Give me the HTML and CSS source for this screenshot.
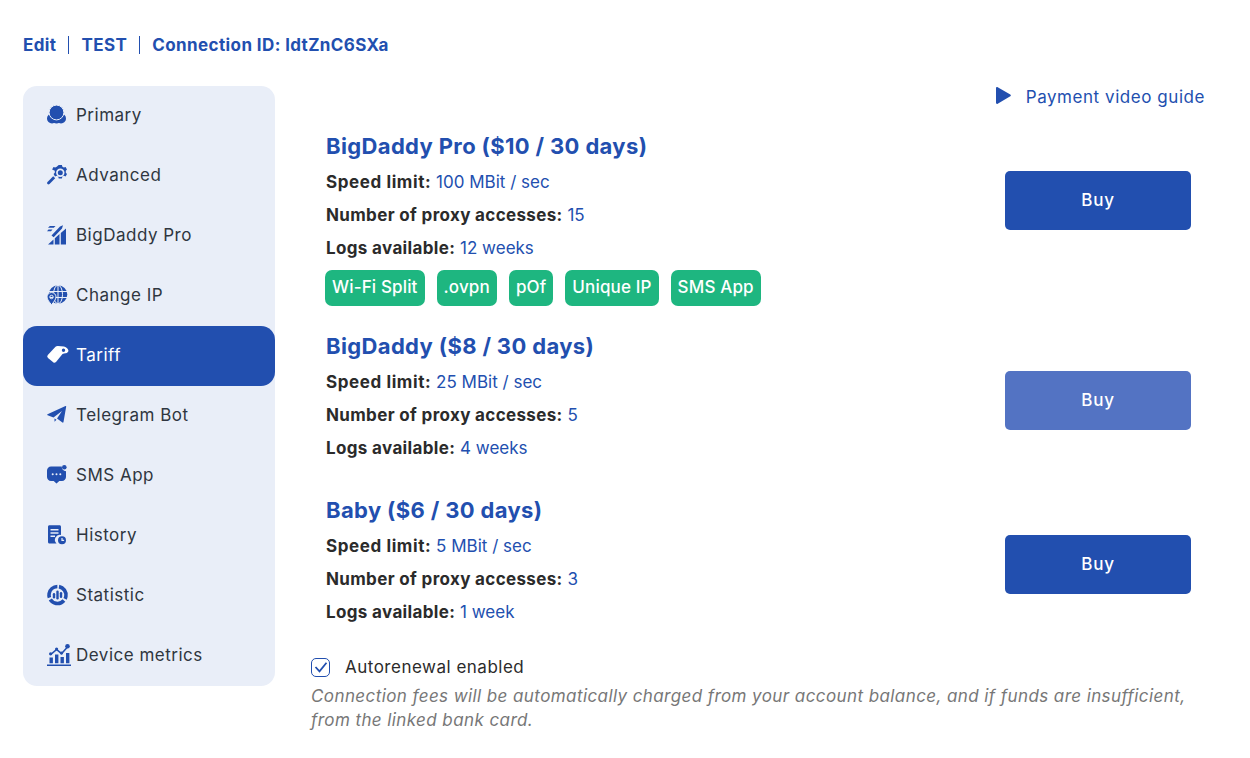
FILE: index.html
```html
<!DOCTYPE html>
<html>
<head>
<title>Tariff</title>
<link rel="stylesheet" href="styles.css">
</head>
<body>

<div class="topbar">
  <span class="crumb">Edit</span>
  <span class="crumb">TEST</span>
  <span class="crumb">Connection ID: ldtZnC6SXa</span>
</div>

<div class="page">
  <div class="sidebar">
    <a class="item">
      <svg class="ico" viewBox="0 0 20 20"><circle cx="5" cy="13.500" r="5"/><circle cx="14" cy="13.500" r="5"/><circle cx="9.500" cy="15" r="3.500"/><circle cx="9.500" cy="7.500" r="7.400" stroke="#e9eef8" stroke-width="1"/></svg>
      <span>Primary</span>
    </a>
    <a class="item">
      <svg class="ico" viewBox="0 0 20 20"><path fill-rule="evenodd" d="M11.700 0h3.200l.5 1.800 1.500.8 1.700-.6 1.400 2.500-1.200 1.200v2l1.200 1.200-1.400 2.500-1.700-.6-1.500.8-.5 1.800h-3.200l-.5-1.800-1.500-.8-1.700.6-1.400-2.500 1.200-1.200v-2L5.100 4.500 6.500 2l1.700.6 1.500-.8zM13.300 3.500a4.200 4.200 0 1 0 0 8.400 4.200 4.200 0 0 0 0-8.400z"/><circle cx="13.300" cy="7.700" r="2.500"/><path d="M6.200 11.300l2 2-5.700 5.700c-.6.500-1.400.500-2 0s-.5-1.400 0-2z"/></svg>
      <span>Advanced</span>
    </a>
    <a class="item">
      <svg class="ico" viewBox="0 0 20 20"><path d="M1 19.500l5.500-5v5zM7.800 19.500v-6.200l4.700-4.200v10.400zM13.800 19.500V7.900L19 3.500v16z"/><path d="M4.500 10.500L13 1.500l3-1.200-1 3.200-8.300 8.800zM2.800 1h5.700L6.800 2.800H1zM1.500 4.500h4L4 6.200H0z"/></svg>
      <span>BigDaddy Pro</span>
    </a>
    <a class="item">
      <svg class="ico" viewBox="0 0 20 20"><circle cx="11" cy="9.500" r="9.300"/><g fill="none" stroke="#e9eef8" stroke-width="1"><path d="M2 6.500h18M2 12.500h18M11 0v19"/><ellipse cx="11" cy="9.500" rx="4.500" ry="9.300"/></g><path fill-rule="evenodd" stroke="#e9eef8" stroke-width="1" d="M4.500 7.500c2.500 0 4.500 2 4.500 4.400 0 2.600-2.600 5.600-4.500 7.800C2.600 17.500 0 14.500 0 11.900c0-2.400 2-4.400 4.500-4.400zm0 2.800a1.700 1.700 0 1 0 0 3.400 1.700 1.700 0 0 0 0-3.400z"/></svg>
      <span>Change IP</span>
    </a>
    <a class="item active">
      <svg class="ico" viewBox="0 0 20 20"><path fill-rule="evenodd" d="M.8 10L8.500 1.800Q9.500.8 11 1L17 1.500Q21 2.500 21.500 6 20.500 8.500 17 8.500L15.500 9 9 17Q7.600 18.300 6.500 17.500L1 13Q-.5 11.500.8 10zM16.500 3.500a1.700 1.700 0 1 0 0 3.400 1.700 1.700 0 0 0 0-3.400z"/></svg>
      <span>Tariff</span>
    </a>
    <a class="item">
      <svg class="ico" viewBox="0 0 20 20"><path d="M.5 9.300L18.500 1c.4-.2.800.1.700.6L16.500 17c-.1.600-.6.800-1.100.5L10 13.500 15 6 6.500 12.500 .6 10.300c-.5-.2-.5-.8-.1-1zM7.500 13.500l2 1.200-2 2z"/></svg>
      <span>Telegram Bot</span>
    </a>
    <a class="item">
      <svg class="ico" viewBox="0 0 20 20"><path fill-rule="evenodd" d="M4 1.500h10.800a4.300 4.300 0 0 0 4.200 4.800V12c0 2.200-1.800 4-4 4h-2.700l-2.800 2.500L6.700 16H4c-2.200 0-4-1.800-4-4V5.500c0-2.200 1.800-4 4-4zm1.700 6.700a1 1 0 1 0 0 2 1 1 0 0 0 0-2zm3.800 0a1 1 0 1 0 0 2 1 1 0 0 0 0-2zm3.800 0a1 1 0 1 0 0 2 1 1 0 0 0 0-2z"/><circle cx="17.300" cy="2.200" r="2.300"/></svg>
      <span>SMS App</span>
    </a>
    <a class="item">
      <svg class="ico" viewBox="0 0 20 20"><path fill-rule="evenodd" d="M2.500 .3h10c.9 0 1.500.6 1.500 1.500v8.200a5 5 0 0 0-4.500 8.500h-7c-.9 0-1.500-.6-1.500-1.500V1.800C1 .9 1.600.3 2.500.3zM3.500 4v1.500h8V4zm0 3.200v1.500h8V7.200zm0 3.200v1.500h4.500v-1.500z"/><path fill-rule="evenodd" d="M15 11.300a4 4 0 1 1 0 8 4 4 0 0 1 0-8zm-.6 1.700v2.900h2.700v-1.200h-1.500V13z"/></svg>
      <span>History</span>
    </a>
    <a class="item">
      <svg class="ico" viewBox="0 0 20 20"><circle cx="10.500" cy="10" r="8.500" fill="none" stroke="#224faf" stroke-width="3.600" stroke-dasharray="15.800 2" transform="rotate(-80 10.500 10)"/><rect x="5.800" y="8" width="2.400" height="5.500" rx="1.200"/><rect x="9.300" y="5.500" width="2.400" height="9" rx="1.200"/><rect x="12.800" y="7" width="2.400" height="6" rx="1.200"/></svg>
      <span>Statistic</span>
    </a>
    <a class="item">
      <svg class="ico wide" viewBox="0 0 24 22"><path d="M0 20.400h24V22H0zM2.500 13.500h3.400v5.800H2.500zM8 10.500h3.400v8.800H8zM13.500 13h3.400v6.300h-3.400zM19 9h3.400v10.300H19z"/><path d="M3.400 9.700L9.600 4.500l4.900 4.100 5-5.700 1.100 1-6 6.800-5-4.200-5.300 4.400z"/><circle cx="3.600" cy="9.800" r="1.600"/><circle cx="9.600" cy="5" r="1.600"/><circle cx="14.500" cy="9" r="1.600"/><circle cx="20.500" cy="2.300" r="2.300"/></svg>
      <span>Device metrics</span>
    </a>
  </div>

  <div class="content">
    <a class="guide">
      <svg class="play" viewBox="0 0 15 17"><path d="M0 1.200C0 .3.900-.2 1.700.3l12.600 7.200c.7.400.7 1.400 0 1.800L1.700 16.700C.9 17.200 0 16.700 0 15.800z"/></svg>
      <span>Payment video guide</span>
    </a>

    <div class="plan">
      <div class="plan-info">
        <h2>BigDaddy Pro ($10 / 30 days)</h2>
        <p class="speed"><b>Speed limit:</b> 100 MBit / sec</p>
        <p><b>Number of proxy accesses:</b> 15</p>
        <p><b>Logs available:</b> 12 weeks</p>
        <div class="tags">
          <span class="tag">Wi-Fi Split</span>
          <span class="tag">.ovpn</span>
          <span class="tag">pOf</span>
          <span class="tag">Unique IP</span>
          <span class="tag">SMS App</span>
        </div>
      </div>
      <button class="buy">Buy</button>
    </div>

    <div class="plan">
      <div class="plan-info">
        <h2>BigDaddy ($8 / 30 days)</h2>
        <p class="speed"><b>Speed limit:</b> 25 MBit / sec</p>
        <p><b>Number of proxy accesses:</b> 5</p>
        <p><b>Logs available:</b> 4 weeks</p>
      </div>
      <button class="buy faded">Buy</button>
    </div>

    <div class="plan">
      <div class="plan-info">
        <h2>Baby ($6 / 30 days)</h2>
        <p class="speed"><b>Speed limit:</b> 5 MBit / sec</p>
        <p><b>Number of proxy accesses:</b> 3</p>
        <p><b>Logs available:</b> 1 week</p>
      </div>
      <button class="buy">Buy</button>
    </div>

    <label class="renew">
      <span class="check">
        <svg viewBox="0 0 17 17"><path d="M3.500 8l4 4.300 7-8.500"/></svg>
      </span>
      <span>Autorenewal enabled</span>
    </label>
    <p class="note">Connection fees will be automatically charged from your account balance, and if funds are insufficient, from the linked bank card.</p>
  </div>
</div>

</body>
</html>
```

FILE: styles.css
```css
body {
  margin: 0;
  background-color: #fff;
  font-family: Inter, "Noto Sans", sans-serif;
  color: #2b2b2b;
}

.topbar {
  display: flex;
  align-items: center;
  height: 18px;
  padding: 36px 0 0 23px;
  margin-bottom: 32px;
  font-size: 17px;
  font-weight: 700;
  letter-spacing: .4px;
  color: #224faf;
}
.crumb {
  line-height: 18px;
  padding: 0 12px;
  border-left: 1px solid #224faf;
}
.crumb:first-child {
  padding-left: 0;
  border-left: 0;
}

.page {
  display: flex;
  align-items: flex-start;
  padding-left: 23px;
}

.sidebar {
  width: 252px;
  flex-shrink: 0;
  background-color: #e9eef8;
  border-radius: 14px;
}
.item {
  display: flex;
  align-items: center;
  box-sizing: border-box;
  height: 60px;
  padding: 0 0 2px 24px;
  font-size: 17px;
  letter-spacing: .5px;
  color: #2f3640;
}
.item.active {
  background-color: #224faf;
  color: #fff;
  border-radius: 14px;
}
.ico {
  width: 20px;
  height: 20px;
  margin-right: 9px;
  flex-shrink: 0;
  overflow: visible;
  fill: #224faf;
}
.ico.wide {
  width: 24px;
  height: 22px;
  margin-right: 5px;
}
.active .ico {
  fill: #fff;
}

.content {
  width: 894px;
  margin-left: 36px;
}

.guide {
  display: flex;
  justify-content: flex-end;
  align-items: center;
  height: 22px;
  margin-bottom: 22px;
  font-size: 17px;
  letter-spacing: .55px;
  color: #224faf;
}
.play {
  width: 15px;
  height: 17px;
  margin-right: 15px;
  margin-top: -4px;
  fill: #224faf;
}

.plan {
  display: flex;
  justify-content: space-between;
  align-items: flex-start;
  padding: 0 14px 0 15px;
  margin-bottom: 24px;
}
.plan-info {
  padding-bottom: 5px;
}
.plan-info:has(.tags) {
  padding-bottom: 0;
}
.plan h2 {
  margin: 0 0 4px 0;
  font-size: 22px;
  line-height: 32px;
  font-weight: 700;
  letter-spacing: .36px;
  color: #224faf;
}
.plan p {
  margin: 0;
  font-size: 17px;
  line-height: 33px;
  color: #224faf;
}
.plan b {
  color: #2b2b2b;
  font-weight: 700;
  letter-spacing: .35px;
}
.plan .speed b {
  letter-spacing: .6px;
}

.tags {
  display: flex;
  gap: 12px;
  margin: 5px 0 0 -1px;
}
.tag {
  height: 36px;
  line-height: 35px;
  padding: 0 7px;
  border-radius: 7px;
  background-color: #1eb680;
  color: #fff;
  font-size: 17px;
  font-weight: 500;
  letter-spacing: .15px;
}

.buy {
  width: 186px;
  height: 59px;
  margin-top: 41px;
  padding-bottom: 3px;
  border: 0;
  border-radius: 5px;
  background-color: #224faf;
  color: #fff;
  font-family: inherit;
  font-size: 17px;
  font-weight: 500;
  letter-spacing: .7px;
}
.buy.faded {
  background-color: #5373c3;
}

.renew {
  display: flex;
  align-items: center;
  height: 20px;
  margin-top: -1px;
  font-size: 17px;
  letter-spacing: .5px;
  color: #2b2b2b;
}
.check {
  width: 17px;
  height: 17px;
  margin-right: 15px;
  border: 1.500px solid #224faf;
  border-radius: 5px;
}
.check svg {
  display: block;
  fill: none;
  stroke: #224faf;
  stroke-width: 1.800;
}
.note {
  margin: 7px 0 0 0;
  font-size: 17px;
  line-height: 24px;
  font-style: italic;
  letter-spacing: .41px;
  color: #777;
}
```
